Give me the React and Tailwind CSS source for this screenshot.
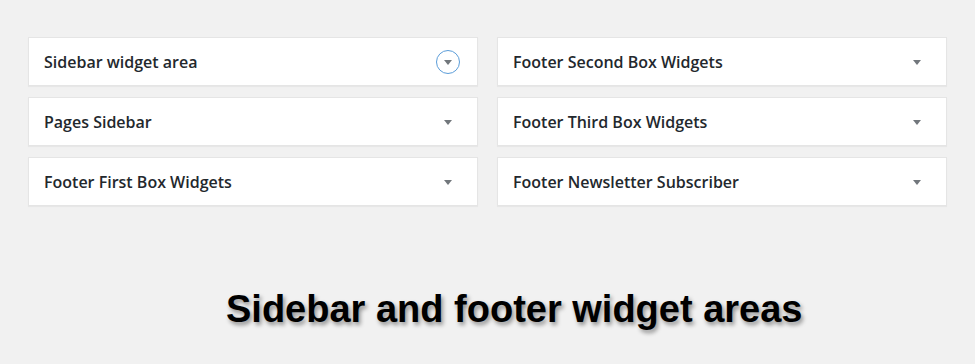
import React from "react";

const areas = [
  "Sidebar widget area",
  "Footer Second Box Widgets",
  "Pages Sidebar",
  "Footer Third Box Widgets",
  "Footer First Box Widgets",
  "Footer Newsletter Subscriber",
];

function Arrow({ active }) {
  if (active) {
    return (
      <span className="flex h-[24px] w-[24px] items-center justify-center rounded-full border border-[#5b9dd9]">
        <span className="mt-[2px] h-0 w-0 border-x-[4px] border-t-[5px] border-x-transparent border-t-[#72777c]" />
      </span>
    );
  }
  return (
    <span className="flex h-[24px] w-[24px] items-center justify-center">
      <span className="mt-[2px] h-0 w-0 border-x-[4px] border-t-[5px] border-x-transparent border-t-[#72777c]" />
    </span>
  );
}

export default function App() {
  return (
    <div className="h-[364px] w-[975px] bg-[#f1f1f1] pt-[37px] pl-[28px]" style={{ fontFamily: "'Open Sans', 'Noto Sans', sans-serif" }}>
      <div className="grid grid-cols-[450px_450px] gap-x-[19px] gap-y-[11px]">
        {areas.map((name, i) => (
          <div
            key={name}
            className="flex h-[49px] items-center justify-between border border-[#e5e5e5] bg-white pl-[15px] pr-[17px] shadow-[0_1px_1px_rgba(0,0,0,0.04)]"
          >
            <span className="text-[16px] font-semibold text-[#23282d]">{name}</span>
            <Arrow active={i === 0} />
          </div>
        ))}
      </div>
      <div
        className="mt-[84px] ml-[198px] text-[38px] font-bold leading-none text-black [text-shadow:2px_3px_4px_rgba(0,0,0,0.4)]"
        style={{ fontFamily: "'Liberation Sans', Arial, sans-serif" }}
      >
        Sidebar and footer widget areas
      </div>
    </div>
  );
}
